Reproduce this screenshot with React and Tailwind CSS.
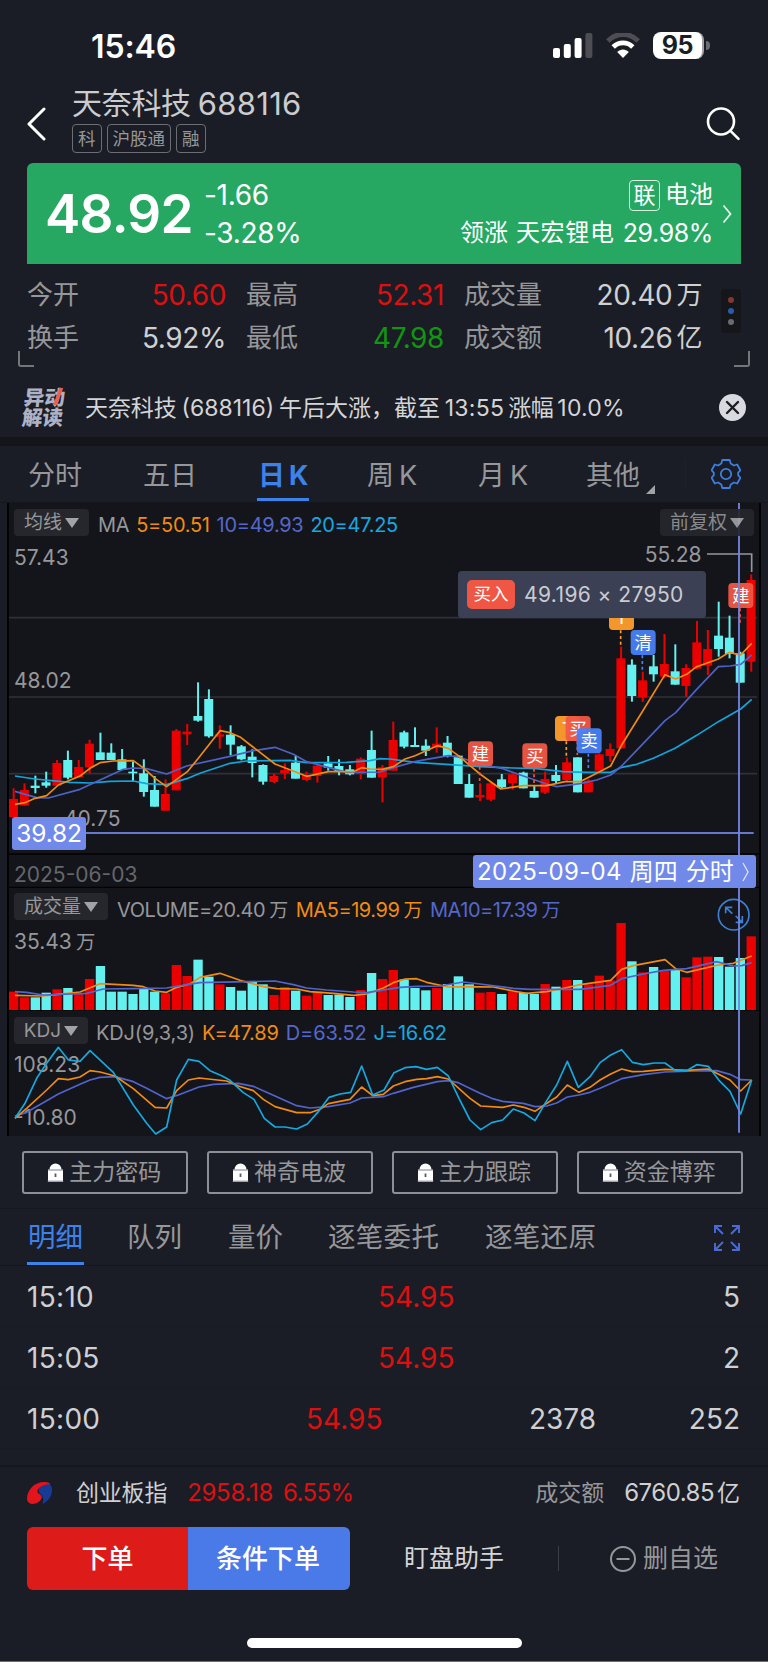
import clsx from "clsx";

// Chart geometry is kept in third-pixel units, every svg below scales it down.
const STEP = 32.54;
const FIRST = 40.5;

// [direction, high, body top, body bottom, low, volume top]
const candles = [
  ["r", 865, 897, 951, 951, 395], ["r", 850, 870, 917, 917, 412],
  ["c", 827, 857, 864, 880, 412], ["c", 815, 847, 857, 863, 398],
  ["r", 780, 789, 857, 857, 388], ["c", 752, 780, 833, 838, 384],
  ["r", 780, 801, 832, 832, 402], ["r", 719, 731, 802, 820, 357],
  ["c", 698, 757, 780, 780, 318], ["c", 730, 758, 780, 780, 395],
  ["c", 747, 778, 810, 810, 395], ["c", 785, 815, 820, 843, 402],
  ["c", 778, 820, 876, 890, 386], ["c", 828, 870, 920, 920, 395],
  ["r", 838, 882, 932, 932, 400], ["r", 687, 692, 871, 871, 315],
  ["r", 672, 695, 703, 735, 348], ["c", 547, 648, 662, 665, 299],
  ["c", 568, 597, 709, 713, 350], ["r", 676, 703, 710, 746, 373],
  ["c", 676, 704, 734, 766, 381], ["c", 735, 739, 778, 781, 392],
  ["c", 748, 770, 789, 832, 366], ["c", 793, 795, 845, 854, 373],
  ["r", 822, 828, 846, 849, 405], ["r", 790, 810, 820, 837, 381],
  ["c", 768, 788, 836, 836, 392], ["r", 815, 826, 840, 843, 407],
  ["r", 790, 797, 828, 848, 395], ["c", 768, 790, 803, 812, 405],
  ["c", 778, 798, 814, 826, 404], ["c", 795, 808, 823, 826, 411],
  ["r", 772, 776, 822, 837, 390], ["c", 692, 750, 833, 833, 339],
  ["r", 795, 802, 832, 907, 357], ["r", 665, 720, 812, 812, 330],
  ["c", 692, 697, 740, 745, 358], ["c", 682, 735, 741, 741, 384],
  ["c", 718, 737, 752, 768, 391], ["r", 682, 731, 743, 758, 384],
  ["c", 708, 728, 768, 772, 372], ["c", 765, 767, 852, 852, 349],
  ["c", 822, 852, 893, 893, 373], ["r", 850, 885, 892, 903, 398],
  ["r", 845, 850, 899, 903, 396], ["c", 822, 838, 862, 865, 402],
  ["r", 820, 823, 849, 869, 394], ["c", 815, 818, 865, 865, 398],
  ["c", 855, 873, 893, 893, 402], ["r", 815, 837, 878, 882, 372],
  ["c", 795, 825, 843, 850, 380], ["r", 772, 787, 840, 843, 360],
  ["c", 772, 772, 877, 877, 360], ["r", 838, 842, 877, 877, 373],
  ["r", 760, 763, 812, 812, 347], ["r", 730, 747, 768, 785, 361],
  ["r", 440, 475, 745, 745, 189], ["c", 478, 494, 588, 605, 304],
  ["r", 515, 541, 592, 606, 337], ["c", 465, 499, 523, 545, 321],
  ["r", 402, 492, 530, 535, 332], ["c", 433, 514, 554, 554, 330],
  ["r", 493, 504, 558, 590, 352], ["r", 363, 427, 506, 508, 292],
  ["r", 390, 447, 497, 525, 290], ["c", 305, 407, 447, 470, 291],
  ["c", 347, 413, 462, 475, 320], ["c", 455, 460, 548, 548, 294],
  ["r", 223, 240, 485, 515, 229],
];

const priceLines = [
  {
    color: "#10a5dc",
    points:
      "45,828 105,837 210,847 270,849 330,844 400,843 440,851 500,854 560,836 600,820 690,790 740,783 870,781 920,788 1040,787 1110,782 1140,776 1170,777 1245,787 1340,793 1440,800 1540,804 1610,806 1690,815 1760,817 1832,817 1865,802 1910,793 1960,775 2025,745 2090,706 2155,665 2222,627 2255,598",
  },
  {
    color: "#4e62c6",
    points:
      "45,874 110,893 145,894 240,868 300,840 370,808 400,804 440,806 500,822 560,798 690,769 760,752 825,742 880,763 920,785 1040,817 1140,816 1180,803 1245,785 1280,778 1345,767 1375,771 1440,792 1505,805 1570,828 1640,852 1670,860 1740,851 1790,840 1832,825 1865,798 1930,730 1995,662 2027,638 2090,568 2155,500 2190,498 2222,493 2255,465",
  },
  {
    color: "#f18b12",
    points:
      "45,913 75,908 105,895 140,887 175,855 240,828 270,805 300,788 340,783 400,782 432,805 465,835 500,860 530,838 562,815 595,775 660,692 690,698 722,712 755,738 825,792 920,829 985,815 1060,815 1085,803 1110,807 1147,808 1180,800 1215,777 1245,767 1312,737 1345,745 1375,767 1440,822 1502,867 1570,857 1640,857 1695,845 1740,845 1790,820 1832,798 1865,735 1930,630 1995,524 2027,537 2060,523 2090,500 2155,477 2187,457 2222,465 2255,430",
  },
];

const volumeLines = [
  {
    color: "#f18b12",
    points:
      "45,406 130,408 175,403 240,396 300,371 400,376 430,380 465,393 500,397 530,382 570,372 600,352 660,340 720,361 790,380 830,386 890,387 930,395 1000,400 1060,406 1100,402 1150,384 1180,368 1215,357 1250,356 1280,367 1345,381 1400,380 1480,381 1540,393 1580,400 1640,395 1695,384 1740,374 1832,361 1865,328 1900,317 1995,299 2027,326 2060,337 2155,315 2200,310 2255,288",
  },
  {
    color: "#5064cc",
    points:
      "45,395 80,397 130,405 260,400 310,387 400,386 500,384 560,374 600,368 740,365 825,363 880,374 920,384 980,390 1060,396 1100,398 1200,382 1250,379 1320,378 1390,366 1440,372 1540,385 1590,388 1740,388 1832,376 1865,356 1930,342 1990,331 2060,326 2150,305 2200,318 2225,317 2255,308",
  },
];

const kdjLines = [
  {
    color: "#5064cc",
    points:
      "45,768 80,757 175,702 240,673 270,660 300,652 345,650 400,665 440,685 500,716 535,705 597,681 640,673 715,670 760,679 830,710 890,737 930,744 985,740 1050,729 1085,714 1150,710 1180,700 1240,682 1312,665 1345,662 1375,668 1440,700 1475,715 1508,724 1570,730 1605,740 1640,738 1670,729 1702,711 1737,705 1770,697 1800,685 1865,656 1930,644 1995,636 2090,633 2150,632 2190,643 2222,659 2255,660",
  },
  {
    color: "#f18b12",
    points:
      "45,775 80,745 140,690 175,656 205,659 240,651 270,632 300,636 345,648 400,686 465,742 500,744 530,692 565,660 597,654 680,663 715,678 760,692 790,718 825,740 890,758 930,758 960,748 985,731 1050,718 1085,681 1118,707 1150,703 1180,678 1215,665 1250,658 1280,656 1312,650 1345,657 1410,715 1442,738 1508,742 1540,735 1572,742 1605,754 1637,732 1670,711 1702,675 1737,697 1770,682 1800,660 1832,642 1865,627 1897,635 1930,634 1995,628 2060,631 2125,627 2190,660 2222,693 2255,660",
  },
  {
    color: "#14a9e0",
    points:
      "45,775 75,730 110,655 140,610 175,562 205,600 240,604 270,572 340,637 400,735 440,790 467,822 500,801 530,660 565,598 597,604 630,632 665,647 690,661 730,698 762,718 793,775 825,801 855,801 890,807 922,792 955,755 987,712 1020,702 1052,697 1085,618 1118,705 1152,690 1182,638 1215,623 1248,620 1280,628 1312,622 1345,648 1377,715 1410,780 1442,809 1475,788 1508,780 1540,747 1572,759 1605,782 1637,727 1670,675 1702,604 1735,682 1770,650 1800,608 1832,585 1865,569 1897,607 1930,614 1963,609 1995,609 2027,632 2060,632 2090,614 2125,619 2157,661 2190,694 2222,762 2255,660",
  },
];

// tail = [x, from, to] of the dotted leader under a trade marker
const markers = [
  { text: "建", x: 1404, y: 724, fill: "#f05644", tail: [1439, 800, 850] },
  { text: "买", x: 1567, y: 730, fill: "#f05644", tail: [1602, 806, 850] },
  { text: "T", x: 1665, y: 648, fill: "#ff9d2c", tail: [1699, 724, 770] },
  { text: "买", x: 1697, y: 648, fill: "#f05644", tail: [1732, 724, 765] },
  { text: "卖", x: 1730, y: 685, fill: "#4880f6", tail: [1765, 761, 806] },
  { text: "T", x: 1827, y: 315, fill: "#ff9d2c", tail: [1862, 391, 438] },
  { text: "清", x: 1892, y: 390, fill: "#4880f6", tail: [1927, 466, 512] },
  { text: "建", x: 2185, y: 249, fill: "#f05644", tail: [2220, 325, 370] },
];

const FONT = "Inter, 'Noto Sans CJK SC', sans-serif";

function color(dir) {
  return dir === "r" ? "#eb0000" : "#64f0ee";
}

function Lines({ data }) {
  return data.map((line) => (
    <polyline
      key={line.color}
      points={line.points}
      fill="none"
      stroke={line.color}
      strokeWidth="5"
      strokeLinejoin="round"
    />
  ));
}

function AxisLabel({ x = 42, y, children, fill = "#96979a" }) {
  return (
    <text x={x} y={y} fill={fill} fontSize="63" fontFamily={FONT}>
      {children}
    </text>
  );
}

function Dropdown({ children, className }) {
  return (
    <button
      className={clsx(
        "flex h-[27px] items-center justify-center rounded bg-[#25272c] text-[19px] leading-none text-[#96979a]",
        className,
      )}
    >
      <span>{children}</span>
      <svg width="14" height="10" viewBox="0 0 14 10" className="ml-[3px]">
        <path d="M0 0h14L7 10z" fill="#a2a3a6" />
      </svg>
    </button>
  );
}

function StatusBar() {
  return (
    <div className="flex h-[81px] items-start pt-8 pr-[58px] pl-[91px]">
      <span className="mt-px text-[32px] leading-[28px] font-semibold tracking-[-0.1px] text-white">
        15:46
      </span>
      <svg className="mt-px ml-auto" width="40" height="26" viewBox="0 0 40 26">
        <rect x="0" y="15" width="7" height="10" rx="2" fill="#fff" />
        <rect x="10.8" y="11" width="7" height="14" rx="2" fill="#fff" />
        <rect x="21.6" y="5" width="7" height="20" rx="2" fill="#fff" />
        <rect x="32.4" y="0" width="7" height="25" rx="2" fill="#4d4e54" />
      </svg>
      <svg className="mt-px ml-[13px]" width="34" height="25" viewBox="0 0 34 25" fill="none">
        <path d="M1.800 8C10-.8 24-.8 32.200 8" stroke="#4d4e54" strokeWidth="5" />
        <path d="M7.200 14c5.400-5.400 14.200-5.400 19.600 0" stroke="#fff" strokeWidth="4.800" />
        <path d="M11.200 19c3.200-3.400 8.400-3.400 11.600 0L17 25z" fill="#fff" />
      </svg>
      <div className="ml-[13px] flex h-[27px] w-[51px] items-center justify-center rounded-[8px] border-r-2 border-[#a2a3a6] bg-white text-[25px] leading-none font-bold tracking-[-0.3px] text-[#1b1d26]">
        95
      </div>
      <div className="mt-[9px] ml-[2px] h-[9px] w-[4px] rounded-r-full bg-[#6b6c71]" />
    </div>
  );
}

function Tag({ children }) {
  return (
    <span className="flex h-[29px] items-center rounded border border-[#6d6e74] px-[5px] text-[17.500px] leading-none text-[#96979b]">
      {children}
    </span>
  );
}

function Header() {
  return (
    <div className="flex h-[82px] pl-[26px]">
      <svg className="mt-[26px]" width="20" height="34" viewBox="0 0 20 34">
        <path d="M18 2L3 17l15 15" fill="none" stroke="#fff" strokeWidth="3" strokeLinecap="round" strokeLinejoin="round" />
      </svg>
      <div className="ml-[26px]">
        <div className="mt-[5px] flex h-[34px] items-center text-[30px] leading-none text-[#cbccce]">
          <span className="tracking-[-0.3px]">天奈科技</span>
          <span className="ml-[7px] text-[31px] tracking-[0.3px]">688116</span>
        </div>
        <div className="mt-[4px] flex gap-[5px]">
          <Tag>科</Tag>
          <Tag>沪股通</Tag>
          <Tag>融</Tag>
        </div>
      </div>
      <svg className="mt-[26px] mr-[27px] ml-auto" width="35" height="34" viewBox="0 0 35 34" fill="none" stroke="#fff" strokeWidth="2.600" strokeLinecap="round">
        <circle cx="15" cy="14.500" r="13" />
        <path d="M24.500 23.800l8 8" />
      </svg>
    </div>
  );
}

function PriceCard() {
  return (
    <div className="mx-[27px] flex h-[101px] rounded-t-[6px] bg-[#26a862] text-white">
      <span className="mt-[24px] ml-[18px] w-[159px] text-[53px] leading-[55px] font-semibold tracking-[-0.7px]">
        48.92
      </span>
      <div className="flex flex-col text-[28px] leading-[38px] tracking-[-0.3px]">
        <span className="mt-[13px]">-1.66</span>
        <span>-3.28%</span>
      </div>
      <div className="ml-auto flex flex-col items-end text-[24px]">
        <div className="mt-[16px] flex h-[32px] items-center leading-none">
          <span className="mr-[5px] flex h-[31px] w-[31px] items-center justify-center rounded border border-white/80 text-[22px]">
            联
          </span>
          <span>电池</span>
        </div>
        <div className="mt-[6px] flex h-[32px] items-center gap-[8px] leading-none">
          <span>领涨</span>
          <span className="tracking-[0.7px]">天宏锂电</span>
          <span className="text-[25px] tracking-[-0.4px]">29.98%</span>
        </div>
      </div>
      <svg className="mt-[41px] mr-[9px] ml-[9px]" width="10" height="20" viewBox="0 0 10 20">
        <path d="M1.500 1.500L8.500 10l-7 8.500" fill="none" stroke="#e4f5ec" strokeWidth="1.800" />
      </svg>
    </div>
  );
}

function Stat({ label, value, unit, tone = "text-[#cfd0d2]" }) {
  return (
    <div className="flex items-center justify-between leading-none">
      <span className="text-[26px] text-[#96979a]">{label}</span>
      <span className={clsx("flex items-center text-[28px] tracking-[-0.4px]", tone)}>
        {value}
        {unit ? <span className="ml-[4px] text-[26px]">{unit}</span> : null}
      </span>
    </div>
  );
}

function Stats() {
  return (
    <div className="relative flex h-[109px] pt-[9px] pl-[27px]">
      <div className="grid h-[86px] grid-cols-[199px_198px_238px] grid-rows-2 gap-x-[20px]">
        <Stat label="今开" value="50.60" tone="text-[#dc1010]" />
        <Stat label="最高" value="52.31" tone="text-[#dc1010]" />
        <Stat label="成交量" value="20.40" unit="万" />
        <Stat label="换手" value="5.92%" />
        <Stat label="最低" value="47.98" tone="text-[#119611]" />
        <Stat label="成交额" value="10.26" unit="亿" />
      </div>
      <div className="mt-[16px] ml-[19px] flex h-[44px] w-[20px] flex-col items-center justify-center gap-[5px] rounded-[4px] bg-[#15161a]">
        <i className="size-[6px] rounded-full bg-[#803830]" />
        <i className="size-[6px] rounded-full bg-[#2a5ba8]" />
        <i className="size-[6px] rounded-full bg-[#6a6b70]" />
      </div>
      <div className="absolute top-[87px] left-[18px] h-[16px] w-[16px] rounded-bl-[3px] border-b-2 border-l-2 border-[#75767b]" />
      <div className="absolute top-[87px] right-[18px] h-[16px] w-[16px] rounded-br-[3px] border-r-2 border-b-2 border-[#75767b]" />
    </div>
  );
}

function News() {
  return (
    <div className="flex h-[64px] items-center pr-[22px] pl-[23px]">
      <div className="relative mt-[5px] -skew-x-6 text-[20.500px] leading-[20px] font-black text-[#adb3c5]">
        <div>异动</div>
        <div>解读</div>
        <i className="absolute top-0 right-[5px] h-[17px] w-[4px] skew-x-[-14deg] bg-[#e8604f]" />
      </div>
      <div className="mt-[6px] ml-[21px] flex items-center text-[23px] leading-none text-[#d4d5d7]">
        <span className="tracking-[-0.1px]">天奈科技</span>
        <span className="ml-[5px]">(688116)</span>
        <span className="ml-[5px]">午后大涨，</span>
        <span className="tracking-[-0.2px]">截至</span>
        <span className="ml-[5px] tracking-[0.3px]">13:55</span>
        <span className="ml-[4px] tracking-[-0.5px]">涨幅</span>
        <span className="ml-[4px] tracking-[0.2px]">10.0%</span>
      </div>
      <svg className="mt-[4px] ml-auto" width="27" height="27" viewBox="0 0 27 27">
        <circle cx="13.500" cy="13.500" r="13.500" fill="#d9dae0" />
        <path d="M8 8l11 11M19 8L8 19" stroke="#1b1d26" strokeWidth="2.400" strokeLinecap="round" />
      </svg>
    </div>
  );
}

const gearPath =
  "M11.300 1h7.400l1 3.600 3.200 1.900 3.300-1 3.200 5.800-2.200 2.400v2.600l2.200 2.400-3.200 5.800-3.300-1-3.200 1.900-1 3.600h-7.400l-1-3.600-3.200-1.900-3.300 1-3.200-5.800 2.200-2.400v-2.600L.6 11.300l3.200-5.800 3.300 1 3.200-1.900z";

function PeriodTabs() {
  return (
    <div className="flex h-[57px] border-b border-[#15161b] text-[27px] leading-[59px] text-[#96979a]">
      <span className="ml-[28px] w-[115px]">分时</span>
      <span className="w-[115px]">五日</span>
      <span className="relative w-[109px] font-bold text-[#3b82ea]">
        日<span className="ml-[4px]">K</span>
        <i className="absolute bottom-[1px] left-[-1px] h-[3px] w-[52px] bg-[#3b82ea]" />
      </span>
      <span className="w-[111px]">
        周<span className="ml-[5px]">K</span>
      </span>
      <span className="w-[108px]">
        月<span className="ml-[5px]">K</span>
      </span>
      <span>其他</span>
      <svg className="mt-[39px] ml-[6px]" width="9" height="9" viewBox="0 0 9 9">
        <path d="M9 0v9H0z" fill="#a2a3a6" />
      </svg>
      <i className="mt-[13px] ml-[30px] h-[30px] w-px bg-[#20222b]" />
      <svg className="mt-[13px] ml-[25px]" width="30" height="30" viewBox="0 0 30 30" fill="none" stroke="#3b7fe0" strokeWidth="1.800" strokeLinejoin="round">
        <path d={gearPath} />
        <circle cx="15" cy="15" r="5.200" />
      </svg>
    </div>
  );
}

function PriceChart() {
  return (
    <div className="relative h-[385px]">
      <svg className="absolute inset-0" width="768" height="385" viewBox="0 9 2304 1155" fontFamily={FONT}>
        <path d="M27 353H2271M27 591H2271M27 821H2271" stroke="#2f303a" strokeWidth="5" />
        <path d="M27 1062H2280M27 1162H2280" stroke="#030304" strokeWidth="4" />
        {candles.map(([dir, high, top, bottom, low], i) => {
          const x = FIRST + i * STEP;
          return (
            <g key={i} fill={color(dir)}>
              <rect x={x - 2.500} y={high} width="6" height={low - high} />
              <rect x={x - 13.500} y={top} width="27" height={bottom - top} />
            </g>
          );
        })}
        <Lines data={priceLines} />
        <AxisLabel y={194}>57.43</AxisLabel>
        <AxisLabel y={565}>48.02</AxisLabel>
        <AxisLabel x={192} y={977}>40.75</AxisLabel>
        <AxisLabel x={1934} y={187}>55.28</AxisLabel>
        <AxisLabel y={1145} fill="#65666b">2025-06-03</AxisLabel>
        <path d="M2121 162H2255V216" fill="none" stroke="#96979a" strokeWidth="5" />
        <path d="M36 999H2261" stroke="#6778cf" strokeWidth="6" />
        {markers.map(({ text, x, y, fill, tail }) => (
          <g key={x}>
            <path d={`M${tail[0]} ${tail[1]}V${tail[2]}`} stroke={fill} strokeWidth="5" strokeDasharray="9 8" />
            <rect x={x} y={y} width="75" height="75" rx="12" fill={fill} opacity="0.95" />
            <text x={x + 37.500} y={y + 56} fill="#fff" fontSize="52" textAnchor="middle">
              {text}
            </text>
          </g>
        ))}
        <path d="M2217 9V1065" stroke="#7485e0" strokeWidth="6" opacity="0.9" />
      </svg>
      <div className="relative flex items-start pt-[6px] pr-[14px] pl-[14px]">
        <Dropdown className="w-[75px]">均线</Dropdown>
        <div className="mt-[2px] ml-[9px] flex gap-[7px] text-[20px] leading-[28px] tracking-[-0.3px]">
          <span className="text-[#96979a]">MA</span>
          <span className="text-[#f18b12]">5=50.51</span>
          <span className="text-[#5468cc]">10=49.93</span>
          <span className="text-[#14a9e0]">20=47.25</span>
        </div>
        <Dropdown className="ml-auto w-[94px] opacity-90">前复权</Dropdown>
      </div>
      <div className="absolute top-[68px] left-[458px] flex h-[47px] w-[248px] items-center rounded-[4px] bg-[#3b4055] pl-[9px]">
        <span className="flex h-[29px] w-[48px] items-center justify-center rounded-[5px] bg-[#f05644] text-[17.500px] text-white">
          买入
        </span>
        <span className="ml-[9px] text-[21px] tracking-[0.4px] text-[#cacbd1]">49.196 × 27950</span>
      </div>
      <div className="absolute top-[314px] left-[12px] flex h-[33px] w-[74px] items-center justify-center rounded-[3px] bg-[#7189e9] text-[24.500px] tracking-[-0.2px] text-white">
        39.82
      </div>
      <div className="absolute top-[352px] left-[473px] flex h-[33px] w-[283px] items-center rounded-[3px] bg-[#7189e9] pl-[4px] text-[24px] leading-none text-white">
        <span className="tracking-[0.3px]">2025-09-04</span>
        <span className="ml-[8px]">周四</span>
        <span className="ml-[8px]">分时</span>
        <svg className="ml-[8px]" width="8" height="20" viewBox="0 0 8 20">
          <path d="M1 1l5 9-5 9" fill="none" stroke="#dfe4fb" strokeWidth="1.300" />
        </svg>
      </div>
    </div>
  );
}

function VolumeChart() {
  return (
    <div className="relative h-[123px]">
      <svg className="absolute inset-0" width="768" height="123" viewBox="0 84 2304 369">
        {candles.map((c, i) => (
          <rect key={i} x={FIRST - 13.500 + i * STEP} y={c[5]} width="28" height={450 - c[5]} fill={color(c[0])} />
        ))}
        <path d="M27 452H2280" stroke="#030304" strokeWidth="4" />
        <Lines data={volumeLines} />
        <AxisLabel y={266}>35.43</AxisLabel>
        <text x="228" y="266" fill="#96979a" fontSize="58" fontFamily={FONT}>万</text>
        <g fill="none" stroke="#3b7fd6" strokeWidth="5">
          <circle cx="2201" cy="164" r="46" />
          <path d="M2177 160V142H2197M2177 142L2197 161M2207 168L2227 187M2227 168V187H2207" />
        </g>
        <path d="M2217 84V453" stroke="#7485e0" strokeWidth="6" opacity="0.9" />
      </svg>
      <div className="relative flex items-start pt-[5px] pl-[14px]">
        <Dropdown className="w-[94px]">成交量</Dropdown>
        <div className="mt-[3px] ml-[9px] flex gap-[8px] text-[20px] leading-[28px] tracking-[-0.45px]">
          <span className="text-[#96979a]">VOLUME=20.40<span className="ml-[4px] text-[19px]">万</span></span>
          <span className="text-[#f18b12]">MA5=19.99<span className="ml-[4px] text-[19px]">万</span></span>
          <span className="text-[#5468cc]">MA10=17.39<span className="ml-[4px] text-[19px]">万</span></span>
        </div>
      </div>
    </div>
  );
}

function KdjChart() {
  return (
    <div className="relative h-[125px]">
      <svg className="absolute inset-0" width="768" height="125" viewBox="0 453 2304 375">
        <AxisLabel y={637}>108.23</AxisLabel>
        <AxisLabel y={795}>-10.80</AxisLabel>
        <Lines data={kdjLines} />
        <path d="M2217 453V818" stroke="#7485e0" strokeWidth="6" opacity="0.9" />
      </svg>
      <div className="relative flex items-start pt-[6px] pl-[14px]">
        <Dropdown className="w-[74px]">KDJ</Dropdown>
        <div className="mt-[2px] ml-[8px] flex gap-[7px] text-[20px] leading-[28px] tracking-[-0.15px]">
          <span className="text-[#96979a]">KDJ(9,3,3)</span>
          <span className="text-[#f18b12]">K=47.89</span>
          <span className="text-[#5468cc]">D=63.52</span>
          <span className="text-[#14a9e0]">J=16.62</span>
        </div>
      </div>
    </div>
  );
}

function LockButtons() {
  return (
    <div className="grid h-[73px] grid-cols-4 gap-[18.500px] border-b border-[#16181e] pt-[15px] pr-[25px] pl-[22px]">
      {["主力密码", "神奇电波", "主力跟踪", "资金博弈"].map((name) => (
        <button
          key={name}
          className="flex h-[43px] items-center justify-center rounded-[3px] border-2 border-[#8d8e96] pr-[2px] text-[23px] leading-none text-[#96979a]"
        >
          <svg className="mr-[5px]" width="17" height="19" viewBox="0 0 17 19">
            <path d="M2.500 7V6.500a6 6 0 0 1 12 0V7h1.500v11.500H1V7z" fill="#fff" />
            <path d="M1 7h15M0.800 18.200h15.400" stroke="#a9aaba" strokeWidth="1.300" />
            <path d="M8.500 10.500v3.500" stroke="#55576a" strokeWidth="1.800" />
          </svg>
          {name}
        </button>
      ))}
    </div>
  );
}

function DetailTabs() {
  return (
    <div className="flex h-[57px] border-b border-[#15161b] text-[27.500px] leading-[57px] text-[#96979a]">
      <span className="relative ml-[28px] w-[99px] text-[#3b82ea]">
        明细
        <i className="absolute bottom-0 left-[-1px] h-[3px] w-[57px] bg-[#3b82ea]" />
      </span>
      <span className="w-[101px]">队列</span>
      <span className="w-[100px]">量价</span>
      <span className="w-[157px] tracking-[0.3px]">逐笔委托</span>
      <span className="tracking-[0.3px]">逐笔还原</span>
      <svg className="mt-[16px] mr-[28px] ml-auto" width="26" height="26" viewBox="0 0 26 26" fill="none" stroke="#4a6ad8" strokeWidth="1.900">
        <path d="M1 8V1h7M1 1l8 8M18 1h7v7M25 1l-8 8M1 18v7h7M1 25l8-8M18 25h7v-7M25 25l-8-8" />
      </svg>
    </div>
  );
}

function Trades() {
  return (
    <div className="h-[201px] border-b-2 border-[#15171c] text-[28px] leading-[63px] text-[#cfd0d2]">
      {[
        ["15:10", "5"],
        ["15:05", "2"],
      ].map(([time, count]) => (
        <div key={time} className="flex h-[61px] border-b border-[#191b22] pr-[28px] pl-[27px]">
          <span className="w-[351px] tracking-[0.3px]">{time}</span>
          <span className="text-[#dc1010]">54.95</span>
          <span className="ml-auto">{count}</span>
        </div>
      ))}
      <div className="flex h-[61px] border-b border-[#191b22] pr-[28px] pl-[27px]">
        <span className="w-[279px] tracking-[0.3px]">15:00</span>
        <span className="w-[223px] text-[#dc1010]">54.95</span>
        <span>2378</span>
        <span className="ml-auto">252</span>
      </div>
    </div>
  );
}

function IndexBar() {
  return (
    <div className="flex h-[60px] items-center pr-[28px] pb-[8px] pl-[27px] text-[23px] leading-none text-[#cfd0d2]">
      <svg width="25" height="22" viewBox="0 0 25 22">
        <path d="M22 1C24 3 25 5 25 8c0 6-3.500 11-9.500 14 1-3 1-6-.5-8.500-2-1.500-3.500-3-3.500-5.500C12 4 17 2.500 22 2z" fill="#173a94" />
        <path d="M22.500 1C17-1.200 9 .5 4.500 5.500 1 9.500-.5 14.500.2 18c.8 3.500 4.300 4.600 8 3.600 4-1.100 6.800-4.300 6.500-7-.3-1.800-2-2.100-3.200-3C8.500 9 12 3 22.500 2.200z" fill="#e3141d" />
      </svg>
      <span className="ml-[24px] tracking-[-0.2px]">创业板指</span>
      <span className="ml-[20px] text-[24px] tracking-[-0.3px] text-[#dc1010]">2958.18</span>
      <span className="ml-[10px] text-[24px] tracking-[-0.6px] text-[#dc1010]">6.55%</span>
      <span className="ml-auto text-[#96979a]">成交额</span>
      <span className="ml-[20px] text-[24px] tracking-[-0.5px]">6760.85</span>
      <span className="ml-[3px]">亿</span>
    </div>
  );
}

function Actions() {
  return (
    <div className="flex h-[63px] items-center pl-[27px] text-[26px] leading-none">
      <button className="h-full w-[161px] rounded-l-[6px] bg-[#dd1b18] font-medium text-white">下单</button>
      <button className="h-full w-[162px] rounded-r-[6px] bg-[#4a79e8] pr-[2px] font-medium text-white">条件下单</button>
      <span className="ml-[54px] text-[25px] text-[#d4d5d7]">盯盘助手</span>
      <i className="ml-[54px] h-[25px] w-px bg-[#3c3d45]" />
      <svg className="ml-[51px]" width="26" height="26" viewBox="0 0 26 26" fill="none" stroke="#96979a" strokeWidth="2">
        <circle cx="13" cy="13" r="12" />
        <path d="M6.500 13h13" />
      </svg>
      <span className="ml-[7px] text-[25px] text-[#96979a]">删自选</span>
    </div>
  );
}

export default function App() {
  return (
    <div className="h-[1662px] w-[768px] overflow-hidden border-b border-[#6e6f74] bg-[#1b1d26] font-[Inter,'Noto_Sans_CJK_SC',sans-serif] whitespace-nowrap">
      <StatusBar />
      <Header />
      <PriceCard />
      <Stats />
      <News />
      <div className="h-[9px] bg-[#14151a]" />
      <PeriodTabs />
      <div className="relative h-[633px] bg-[#14151a]">
        <PriceChart />
        <VolumeChart />
        <KdjChart />
        <i className="absolute top-0 left-0 h-full w-[9px] border-r-2 border-[#030304] bg-[#1b1d26]" />
        <i className="absolute top-0 right-0 h-full w-[9px] border-l-2 border-[#030304] bg-[#1b1d26]" />
      </div>
      <LockButtons />
      <DetailTabs />
      <Trades />
      <IndexBar />
      <Actions />
      <div className="mx-auto mt-[48px] h-[10px] w-[275px] rounded-full bg-white" />
    </div>
  );
}
